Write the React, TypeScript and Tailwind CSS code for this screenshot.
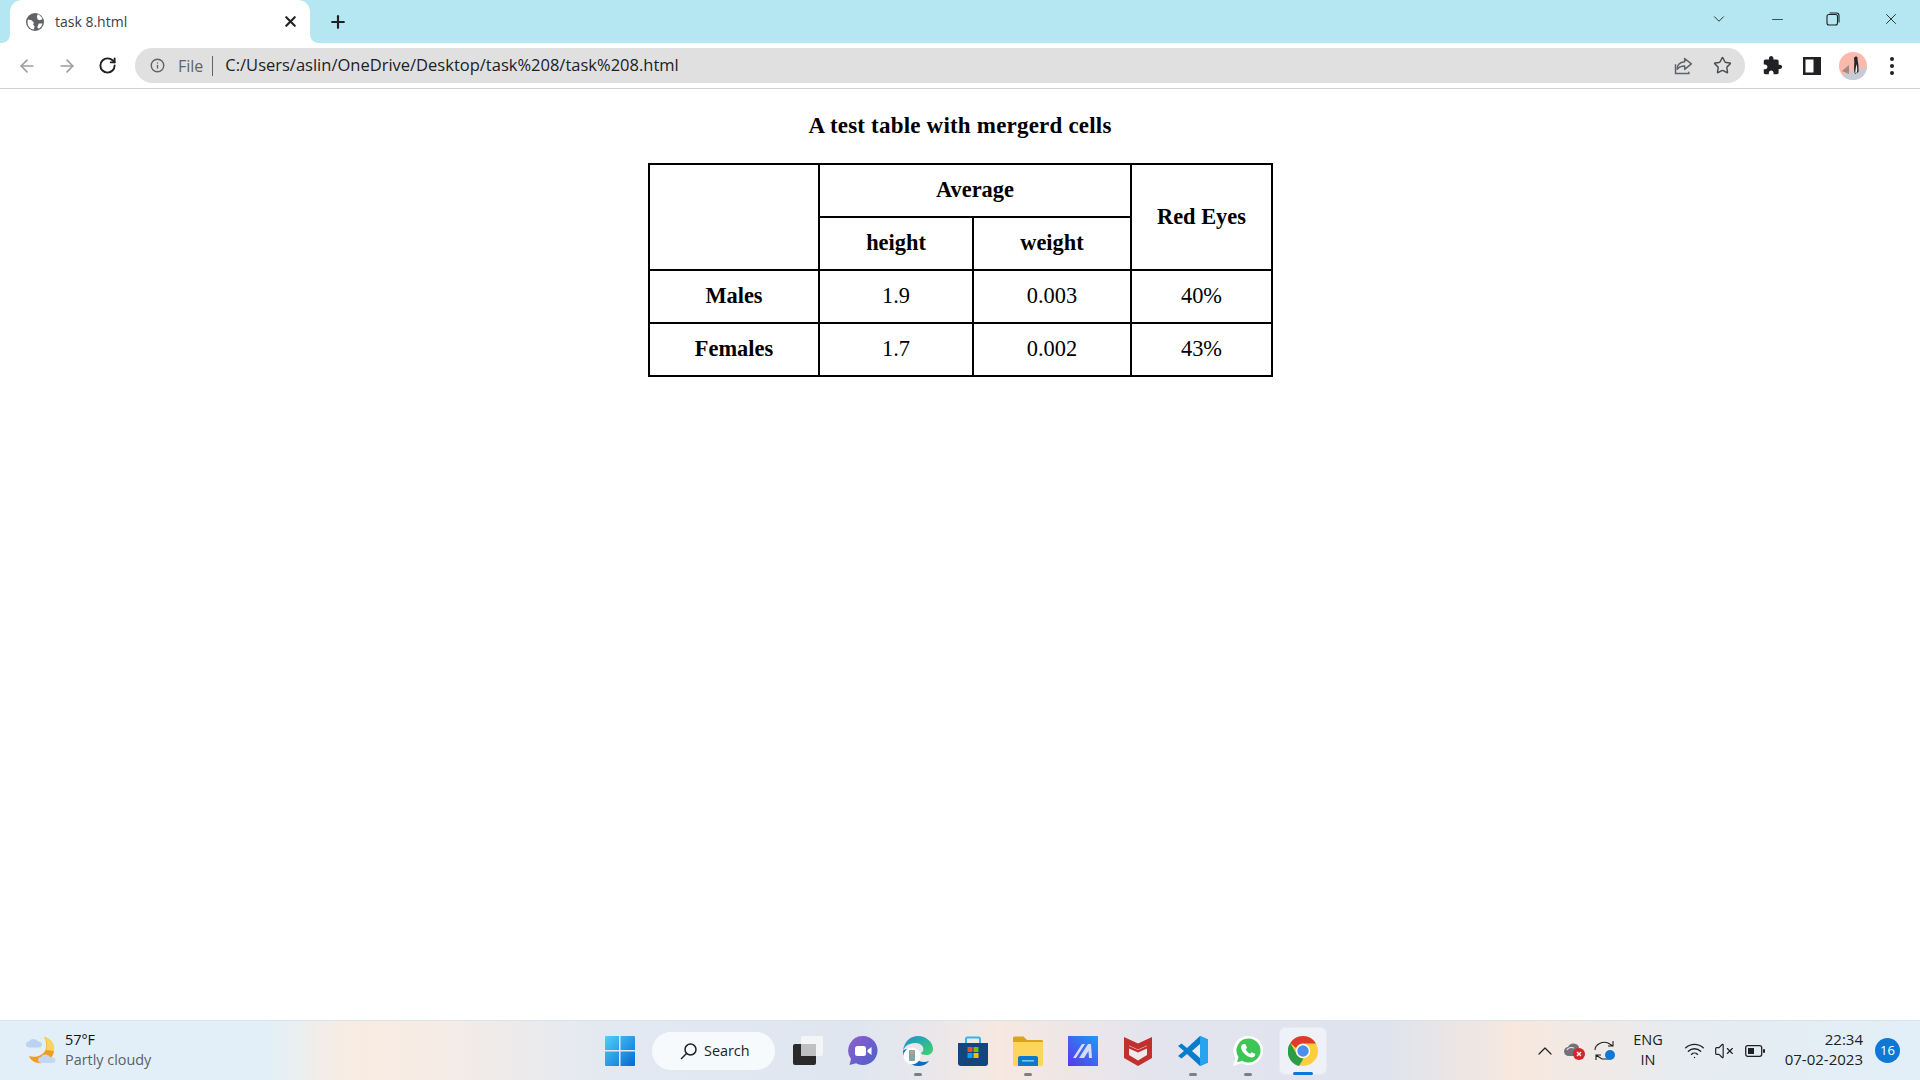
import React from 'react';
import { ArrowLeft, ArrowRight, ChevronDown, ChevronUp, Info, Minus, Plus, RotateCw, Star, VolumeX, Wifi, X } from 'lucide-react';

const Globe = () => (
  <svg width="18" height="18" viewBox="0 0 24 24">
    <circle cx="12" cy="12" r="12" fill="#5f6368" />
    <path d="M15.500 1.500c3 1 5.500 3.500 6.500 6.500l-3.500 1.500-3-1-1-3.500zM2.500 8.500l5 1 3 3-1 3 2 2-1 4.500C6 22 2 17.500 2 12c0-1 .2-2.500.5-3.500zM17 14h5c-.5 3-2.500 5.500-5 7l-2-2z" fill="#fff" />
  </svg>
);

const Share = () => (
  <svg width="20" height="20" viewBox="0 0 24 24" fill="none" stroke="#5f6368" strokeWidth="1.800">
    <path d="M3 10v11h16v-2" />
    <path d="M14 3l8 6.500-8 6.500v-4c-4 0-7 1-9 4 0-5 3-8.500 9-9z" strokeLinejoin="round" />
  </svg>
);

const Puzzle = () => (
  <svg width="21" height="21" viewBox="0 0 24 24" fill="#202124">
    <path d="M20.500 11H19V7c0-1.100-.9-2-2-2h-4V3.500C13 2.120 11.880 1 10.500 1S8 2.120 8 3.500V5H4c-1.100 0-1.990.9-1.990 2v3.800H3.500c1.490 0 2.700 1.210 2.700 2.700s-1.210 2.700-2.700 2.700H2V20c0 1.100.9 2 2 2h3.800v-1.500c0-1.490 1.210-2.700 2.700-2.700 1.490 0 2.700 1.210 2.700 2.700V22H17c1.100 0 2-.9 2-2v-4h1.500c1.380 0 2.500-1.120 2.500-2.500S21.880 11 20.500 11z" />
  </svg>
);

const SidePanel = () => (
  <svg width="18" height="18" viewBox="0 0 18 18">
    <rect width="18" height="18" fill="#202124" />
    <rect x="2.500" y="2.500" width="8" height="13" fill="#fff" />
  </svg>
);

const Avatar = () => (
  <svg width="28" height="28" viewBox="0 0 28 28">
    <clipPath id="av"><circle cx="14" cy="14" r="14" /></clipPath>
    <g clipPath="url(#av)">
      <rect width="28" height="28" fill="#f9b9ac" />
      <path d="M0 24L28 15v13H0z" fill="#c5ccd8" />
      <path d="M3 19l7-6v9z" fill="#a08a85" />
      <path d="M15 6c1-2 3.500-2 3.500 0 0 3 1.500 7 1 14l-3.500 2c-2-5 0-10-1-16z" fill="#24262b" />
      <path d="M17.500 12c.8 3 1 6 .3 8.500l-1.500.8c0-3.500.7-6 1.200-9.300z" fill="#eef0f3" />
    </g>
  </svg>
);

const Restore = () => (
  <svg width="14" height="14" viewBox="0 0 14 14" fill="none" stroke="#202124" strokeWidth="1.100">
    <rect x="1" y="2.500" width="10.500" height="10.500" rx="2" />
    <path d="M3.500 1h7c1.500 0 2.500 1 2.500 2.500v7" />
  </svg>
);

const WeatherIcon = () => (
  <svg width="30" height="29" viewBox="0 0 30 29">
    <path d="M18 1c7 1.500 11 8 10 14-1 8-9 13-16 12-5-1-8-4-9-7 6 2 13 0 16-5 2.500-4 1.500-10-1-14z" fill="#f29b1d" />
    <path d="M18 1c7 1.500 11 8 10 14l-8-1c2-4 1-9-2-13z" fill="#fbd35e" />
    <path d="M3.500 11.500C1.500 11.500 0 10.300 0 8.500S1.500 5.600 3 5.500c1-3.500 7.500-3.500 9 0 2 0 4 1 4 3s-1.500 3-3.500 3z" fill="#bcd2f2" />
    <path d="M15.500 27c-2 0-3.500-1.200-3.500-3s1.500-3 3-3c1-3.500 7.500-3.500 9 0 3 0 5.500 1 5.500 3s-1.500 3-3.500 3z" fill="#c4d8f4" />
  </svg>
);

const WindowsLogo = () => (
  <svg width="30" height="30" viewBox="0 0 30 30">
    <defs>
      <linearGradient id="wl" x1="0" y1="0" x2="1" y2="1">
        <stop offset="0" stopColor="#4fd0fb" />
        <stop offset="1" stopColor="#0669cf" />
      </linearGradient>
    </defs>
    <path d="M1 0h13v14H0V1a1 1 0 0 1 1-1zM15.500 0H29a1 1 0 0 1 1 1v13H15.500zM0 15.500h14V30H1a1 1 0 0 1-1-1zM15.500 15.500H30V29a1 1 0 0 1-1 1H15.500z" fill="url(#wl)" />
  </svg>
);

const TaskView = () => (
  <svg width="30" height="30" viewBox="0 0 30 30">
    <rect x="8" y="0" width="22" height="20" rx="2" fill="#f4f5f6" />
    <rect x="0" y="8" width="23" height="21" rx="2" fill="#2a2a2a" />
    <rect x="8" y="8" width="15" height="12" fill="#bfc0c2" />
  </svg>
);

const Teams = () => (
  <svg width="30" height="30" viewBox="0 0 30 30">
    <defs>
      <linearGradient id="tm" x1="0" y1="0" x2="1" y2="1">
        <stop offset="0" stopColor="#8f5fd0" />
        <stop offset="1" stopColor="#4c5fc8" />
      </linearGradient>
    </defs>
    <path d="M15 0a14.500 14.500 0 1 1-7 27.200L1.500 29 3 23A14.500 14.500 0 0 1 15 0z" fill="url(#tm)" />
    <rect x="7" y="10" width="11" height="10" rx="2.500" fill="#fff" />
    <path d="M19.500 14l4-3v8l-4-3z" fill="#fff" />
  </svg>
);

const Edge = () => (
  <svg width="30" height="30" viewBox="0 0 30 30">
    <defs>
      <linearGradient id="eg" x1="0" y1="0" x2="1" y2="1">
        <stop offset="0" stopColor="#1a8fd8" />
        <stop offset="1" stopColor="#42d26a" />
      </linearGradient>
    </defs>
    <path d="M0 15C1 5 8 0 15 0c8 0 15 6 15 13 0 4-3 6-7 6-3 0-5-1-5-2 2-1 3-3 2-6-2-4-8-5-13-3-4 1-6 4-7 7z" fill="url(#eg)" />
    <path d="M0 15c0 8 7 15 15 15 5 0 9-2 11-5-5 2-11 1-13-3-1-3 0-6 2-8-6-1-13-2-15 1z" fill="#0f6bb5" />
    <circle cx="9" cy="20" r="8.500" fill="#fff" />
    <rect x="6" y="14" width="6" height="11" rx="1" fill="#7fa7a8" />
    <rect x="7.500" y="15" width="3" height="3" fill="#c99a85" />
  </svg>
);

const Store = () => (
  <svg width="30" height="30" viewBox="0 0 30 30">
    <path d="M8 7V3a1.500 1.500 0 0 1 1.500-1.500h11A1.500 1.500 0 0 1 22 3v4" fill="none" stroke="#35b4e8" strokeWidth="2" />
    <path d="M0 7h30v20a3 3 0 0 1-3 3H3a3 3 0 0 1-3-3z" fill="#13467f" />
    <rect x="9.500" y="11" width="5" height="5" fill="#f25022" />
    <rect x="15.500" y="11" width="5" height="5" fill="#7fba00" />
    <rect x="9.500" y="17" width="5" height="5" fill="#00a4ef" />
    <rect x="15.500" y="17" width="5" height="5" fill="#ffb900" />
  </svg>
);

const Explorer = () => (
  <svg width="30" height="30" viewBox="0 0 30 30">
    <path d="M0 2a1.500 1.500 0 0 1 1.500-1.500h9L14 4h14.500A1.500 1.500 0 0 1 30 5.500V8H0z" fill="#d9a21f" />
    <path d="M0 6h30v22.500a1.500 1.500 0 0 1-1.500 1.500h-27A1.500 1.500 0 0 1 0 28.500z" fill="#fbd65a" />
    <path d="M5 30v-8a2 2 0 0 1 2-2h16a2 2 0 0 1 2 2v8z" fill="#0f78c8" />
    <rect x="9" y="24" width="12" height="1.600" fill="#79c5f2" />
  </svg>
);

const MaLogo = () => (
  <svg width="30" height="30" viewBox="0 0 30 30">
    <defs>
      <linearGradient id="ma" x1="0" y1="1" x2="1" y2="0">
        <stop offset="0" stopColor="#5a35ee" />
        <stop offset="1" stopColor="#1f9af5" />
      </linearGradient>
    </defs>
    <rect width="30" height="30" fill="url(#ma)" />
    <path d="M5 22L14 8h3L8 22zM11 22l9-14h3l1 14h-3l-.5-7-4.500 7z" fill="#d6dcf7" />
  </svg>
);

const McAfee = () => (
  <svg width="28" height="30" viewBox="0 0 28 30">
    <path d="M0 1l14 6.500L28 1v21l-14 8-14-8z" fill="#c0302e" />
    <path d="M5 9.500l9 4 9-4V19l-9 5.500L5 19z" fill="#f0e8ea" />
    <path d="M5 10l9 4 9-4v2.500l-9 4-9-4z" fill="#c0302e" />
  </svg>
);

const VsCode = () => (
  <svg width="30" height="30" viewBox="0 0 30 30">
    <path d="M22 0l8 3.500v23L22 30 9 18l-5.500 4.500L0 20l6-5-6-5 3.500-2.500L9 12z" fill="#0a7ccc" />
    <path d="M22 0l8 3.500v23L22 30z" fill="#27a3ef" />
    <path d="M22 8l-8 7 8 7z" fill="#e6edf4" />
  </svg>
);

const WhatsApp = () => (
  <svg width="30" height="30" viewBox="0 0 30 30">
    <path d="M15.500 0a14.500 14.500 0 1 1-7 27.200L0 30l2.500-8A14.500 14.500 0 0 1 15.500 0z" fill="#fff" />
    <path d="M15.500 2.500a12 12 0 1 1-6.300 22.200l-5.200 1.600 1.600-5A12 12 0 0 1 15.500 2.500z" fill="#3dc556" />
    <path d="M11 8l1.500.2 1.500 3.500-1.300 1.800c1 2 2.300 3.300 4.300 4.300l1.800-1.500 3.500 1.700c0 2-1.500 3.500-3.500 3.500C13 21 8 15 8 11c0-1.500 1.500-3 3-3z" fill="#fff" />
  </svg>
);

const Chrome = () => (
  <svg width="30" height="30" viewBox="0 0 30 30">
    <circle cx="15" cy="15" r="15" fill="#ffcd40" />
    <path d="M15 0a15 15 0 0 1 13 7.500H15a7.500 7.500 0 0 0-7 4.500L2.300 7A15 15 0 0 1 15 0z" fill="#e0392e" />
    <path d="M2.300 7L9 18.800a7.500 7.500 0 0 0 6.500 3.700L11 30A15 15 0 0 1 2.300 7z" fill="#2c9c46" />
    <circle cx="15" cy="15" r="7.200" fill="#fff" />
    <circle cx="15" cy="15" r="5.700" fill="#4a8ff0" />
  </svg>
);

const CloudError = () => (
  <svg width="22" height="20" viewBox="0 0 22 20">
    <path d="M5 15c-3 0-5-2-5-4.500S2 6 4 6c1-3 5-4.500 8-3 2 1 3 2 3 4l-3 8z" fill="#707478" />
    <path d="M3 9c1-2 4-3 7-2" stroke="#e8e8e8" strokeWidth="1.200" fill="none" />
    <circle cx="15" cy="13" r="6" fill="#d8232a" />
    <path d="M13 11l4 4m0-4l-4 4" stroke="#fff" strokeWidth="1.400" />
  </svg>
);

const SyncDot = () => (
  <svg width="22" height="22" viewBox="0 0 22 22" fill="none" stroke="#202124" strokeWidth="1.100">
    <path d="M1 10c0-6 8-9 13-7l5 3M19 1v5h-5" />
    <path d="M15 19H8L2 15M2 20v-5h5" />
    <circle cx="16" cy="15" r="5" fill="#0f78d4" stroke="none" />
  </svg>
);

const Battery = () => (
  <svg width="20" height="12" viewBox="0 0 20 12" fill="none">
    <rect x=".7" y=".7" width="16" height="10.600" rx="2" stroke="#202124" strokeWidth="1.300" />
    <rect x="3" y="3" width="6" height="6" fill="#202124" />
    <rect x="18" y="4" width="2" height="4" rx="1" fill="#202124" />
  </svg>
);

const dock = [
  { icon: <TaskView />, dot: false },
  { icon: <Teams />, dot: false },
  { icon: <Edge />, dot: true },
  { icon: <Store />, dot: false },
  { icon: <Explorer />, dot: true },
  { icon: <MaLogo />, dot: false },
  { icon: <McAfee />, dot: false },
  { icon: <VsCode />, dot: true },
  { icon: <WhatsApp />, dot: true },
];

const th = 'border-2 border-black pb-[2px] font-bold text-center align-middle';
const td = 'border-2 border-black pb-[2px] font-normal text-center align-middle';

export default function App() {
  return (
    <div className="flex h-screen w-full flex-col overflow-hidden bg-white font-['Open_Sans',sans-serif] text-[#202124]">
      {/* tab strip */}
      <div className="flex h-[43px] shrink-0 items-end bg-[#b5e7f3] pl-[10px]">
        <div className="relative flex h-[43px] w-[300px] items-center rounded-t-xl bg-white pl-[16px] pr-[11px]">
          <div className="absolute bottom-0 left-[-8px] h-[8px] w-[8px] bg-[radial-gradient(circle_at_0_0,#b5e7f3_7.5px,#ffffff_8px)]" />
          <div className="absolute bottom-0 right-[-8px] h-[8px] w-[8px] bg-[radial-gradient(circle_at_100%_0,#b5e7f3_7.5px,#ffffff_8px)]" />
          <Globe />
          <span className="ml-[11px] flex-1 text-[14px] text-[#3c4043]">task 8.html</span>
          <X size={17} strokeWidth={3} color="#202124" />
        </div>
        <div className="ml-[18px] flex h-[43px] items-center">
          <Plus size={20} strokeWidth={2.600} color="#202124" />
        </div>
        <div className="ml-auto flex h-[38px] items-center self-start">
          <ChevronDown size={18} strokeWidth={1.200} className="mr-[41px]" />
          <Minus size={17} strokeWidth={1.100} className="mr-[40px]" />
          <Restore />
          <X size={18} strokeWidth={1.200} className="ml-[42px] mr-[20px]" />
        </div>
      </div>

      {/* toolbar */}
      <div className="flex h-[46px] shrink-0 items-center border-b border-b-[#d0d0d0] bg-white">
        <div className="flex w-[135px] shrink-0 items-center pl-[17px]">
          <ArrowLeft size={20} color="#9b9ea3" strokeWidth={2} />
          <ArrowRight size={20} color="#9b9ea3" strokeWidth={2} className="ml-[20px]" />
          <RotateCw size={19} color="#202124" strokeWidth={2.400} className="ml-[21px]" />
        </div>
        <div className="flex h-[35px] w-[1610px] shrink-0 items-center rounded-full bg-[#e0e0e0] pl-[15px] pr-[13px]">
          <Info size={15} color="#5f6368" strokeWidth={2.200} />
          <span className="ml-[13px] text-[16px] text-[#5f6368]">File</span>
          <div className="ml-[9px] h-[20px] w-px bg-[#5f6368]" />
          <span className="ml-[12px] flex-1 text-[16.500px] text-[#202124]">C:/Users/aslin/OneDrive/Desktop/task%208/task%208.html</span>
          <Share />
          <Star size={19} color="#4a4d51" strokeWidth={1.800} className="ml-[20px]" />
        </div>
        <div className="ml-[17px] flex items-center">
          <Puzzle />
          <div className="ml-[20px]"><SidePanel /></div>
          <div className="ml-[18px]"><Avatar /></div>
          <div className="ml-[23px] flex flex-col gap-[3px]">
            <div className="h-[4px] w-[4px] rounded-full bg-[#202124]" />
            <div className="h-[4px] w-[4px] rounded-full bg-[#202124]" />
            <div className="h-[4px] w-[4px] rounded-full bg-[#202124]" />
          </div>
        </div>
      </div>

      {/* page */}
      <main className="flex flex-1 flex-col items-center font-['Liberation_Serif',serif] text-[22.400px] text-black">
        <h1 className="mt-[21px] mb-[22px] text-[23px] font-bold leading-[31px] tracking-[0.2px]">A test table with mergerd cells</h1>
        <table className="ml-[1px] w-[625px] table-fixed border-collapse border-2 border-black">
          <colgroup>
            <col className="w-[170px]" />
            <col className="w-[154px]" />
            <col className="w-[158px]" />
            <col className="w-[141px]" />
          </colgroup>
          <tbody>
            <tr className="h-[53px]">
              <th rowSpan={2} className={th}></th>
              <th colSpan={2} className={th}>Average</th>
              <th rowSpan={2} className="border-2 border-black font-bold text-center align-middle">Red Eyes</th>
            </tr>
            <tr className="h-[53px]">
              <th className={th}>height</th>
              <th className={th}>weight</th>
            </tr>
            <tr className="h-[53px]">
              <th className={th}>Males</th>
              <td className={td}>1.9</td>
              <td className={td}>0.003</td>
              <td className={td}>40%</td>
            </tr>
            <tr className="h-[53px]">
              <th className={th}>Females</th>
              <td className={td}>1.7</td>
              <td className={td}>0.002</td>
              <td className={td}>43%</td>
            </tr>
          </tbody>
        </table>
      </main>

      {/* taskbar */}
      <footer className="flex h-[60px] shrink-0 items-center border-t border-t-[#d9e3ea] bg-[linear-gradient(90deg,#e2eff8_0%,#e2eff8_14%,#f9ece2_18%,#f7ece4_22%,#e2e9f2_32%,#e0e6f0_45%,#eee8e8_50%,#f7e8e0_52%,#e3e4ee_60%,#dfe3ee_72%,#efe6e2_77%,#f8e8de_79%,#e6ecf2_88%,#e2eff8_100%)]">
        <div className="flex w-[592px] shrink-0 items-center pl-[26px]">
          <WeatherIcon />
          <div className="ml-[9px] mb-[1px] text-[14.400px] leading-[20px]">
            <div className="text-[#111]">57°F</div>
            <div className="text-[#5a5f66]">Partly cloudy</div>
          </div>
        </div>
        <div className="flex w-[56px] shrink-0 justify-center"><WindowsLogo /></div>
        <div className="ml-[4px] flex h-[38px] w-[123px] shrink-0 items-center rounded-full bg-[#f6fafd] pl-[28px] text-[14.400px]">
          <svg width="18" height="18" viewBox="0 0 18 18" fill="none" stroke="#202124" strokeWidth="1.500">
            <circle cx="10.500" cy="7.500" r="5.500" />
            <path d="M6.500 11.500L1 17" />
          </svg>
          <span className="ml-[6px] text-[#202124]">Search</span>
        </div>
        <div className="ml-[5px] flex">
          {dock.map((d, i) => (
            <div key={i} className="relative flex h-[48px] w-[55px] items-center justify-center">
              {d.icon}
              {d.dot && <div className="absolute bottom-[-1px] h-[3px] w-[8px] rounded-full bg-[#7b7f85]" />}
            </div>
          ))}
          <div className="relative ml-[4px] flex h-[48px] w-[48px] items-center justify-center rounded-md border border-[#e6eaf0] bg-[#eef2f8]">
            <Chrome />
            <div className="absolute bottom-[-1px] h-[3px] w-[20px] rounded-full bg-[#0f78d4]" />
          </div>
        </div>
        <div className="ml-[206px] flex items-center">
          <ChevronUp size={24} strokeWidth={1.200} />
          <div className="ml-[7px]"><CloudError /></div>
          <div className="ml-[8px]"><SyncDot /></div>
          <div className="ml-[17px] mb-[2px] flex w-[30px] flex-col items-center text-[14.500px] leading-[20px]">
            <span>ENG</span>
            <span>IN</span>
          </div>
          <Wifi size={21} strokeWidth={1.600} className="ml-[21px]" />
          <VolumeX size={20} strokeWidth={1.400} className="ml-[9px]" />
          <div className="ml-[11px]"><Battery /></div>
          <div className="ml-[18px] mb-[3px] flex w-[80px] flex-col items-end text-[15px] leading-[20px]">
            <span>22:34</span>
            <span>07-02-2023</span>
          </div>
          <div className="ml-[12px] flex h-[25px] w-[25px] items-center justify-center rounded-full bg-[#0f78d4] text-[13px] text-white">16</div>
        </div>
      </footer>
    </div>
  );
}
